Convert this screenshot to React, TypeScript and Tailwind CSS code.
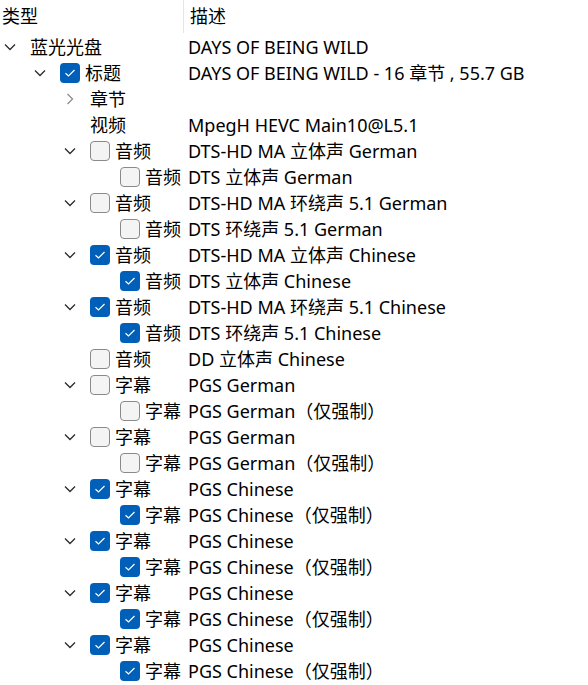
import type { ReactNode } from 'react';

type Row = {
  level: number;
  chevron?: 'down' | 'right';
  checked?: boolean;
  label: string;
  desc: string;
};

const rows: Row[] = [
  { level: 0, chevron: 'down', label: '蓝光光盘', desc: 'DAYS OF BEING WILD' },
  { level: 1, chevron: 'down', checked: true, label: '标题', desc: 'DAYS OF BEING WILD - 16 章节 , 55.7 GB' },
  { level: 2, chevron: 'right', label: '章节', desc: '' },
  { level: 2, label: '视频', desc: 'MpegH HEVC Main10@L5.1' },
  { level: 2, chevron: 'down', checked: false, label: '音频', desc: 'DTS-HD MA 立体声 German' },
  { level: 3, checked: false, label: '音频', desc: 'DTS 立体声 German' },
  { level: 2, chevron: 'down', checked: false, label: '音频', desc: 'DTS-HD MA 环绕声 5.1 German' },
  { level: 3, checked: false, label: '音频', desc: 'DTS 环绕声 5.1 German' },
  { level: 2, chevron: 'down', checked: true, label: '音频', desc: 'DTS-HD MA 立体声 Chinese' },
  { level: 3, checked: true, label: '音频', desc: 'DTS 立体声 Chinese' },
  { level: 2, chevron: 'down', checked: true, label: '音频', desc: 'DTS-HD MA 环绕声 5.1 Chinese' },
  { level: 3, checked: true, label: '音频', desc: 'DTS 环绕声 5.1 Chinese' },
  { level: 2, checked: false, label: '音频', desc: 'DD 立体声 Chinese' },
  { level: 2, chevron: 'down', checked: false, label: '字幕', desc: 'PGS German' },
  { level: 3, checked: false, label: '字幕', desc: 'PGS German（仅强制）' },
  { level: 2, chevron: 'down', checked: false, label: '字幕', desc: 'PGS German' },
  { level: 3, checked: false, label: '字幕', desc: 'PGS German（仅强制）' },
  { level: 2, chevron: 'down', checked: true, label: '字幕', desc: 'PGS Chinese' },
  { level: 3, checked: true, label: '字幕', desc: 'PGS Chinese（仅强制）' },
  { level: 2, chevron: 'down', checked: true, label: '字幕', desc: 'PGS Chinese' },
  { level: 3, checked: true, label: '字幕', desc: 'PGS Chinese（仅强制）' },
  { level: 2, chevron: 'down', checked: true, label: '字幕', desc: 'PGS Chinese' },
  { level: 3, checked: true, label: '字幕', desc: 'PGS Chinese（仅强制）' },
  { level: 2, chevron: 'down', checked: true, label: '字幕', desc: 'PGS Chinese' },
  { level: 3, checked: true, label: '字幕', desc: 'PGS Chinese（仅强制）' },
];

// 每级缩进 30px
const indent: Record<number, string> = {
  0: 'pl-0',
  1: 'pl-[30px]',
  2: 'pl-[60px]',
  3: 'pl-[90px]',
};

function Chevron({ dir }: { dir: 'down' | 'right' }) {
  if (dir === 'down') {
    return (
      <svg width="12" height="8" viewBox="0 0 12 8" className="ml-[4px]">
        <polyline points="1,1.5 6,6.5 11,1.5" fill="none" stroke="#2b2b2b" strokeWidth="1.3" />
      </svg>
    );
  }
  return (
    <svg width="8" height="12" viewBox="0 0 8 12" className="ml-[6px]">
      <polyline points="1.5,1 6.5,6 1.5,11" fill="none" stroke="#8c8c8c" strokeWidth="1.3" />
    </svg>
  );
}

function Checkbox({ checked }: { checked: boolean }) {
  if (checked) {
    return (
      <span className="w-[20px] h-[20px] rounded-[4px] bg-[#005fb8] flex items-center justify-center shrink-0">
        <svg width="12" height="10" viewBox="0 0 12 10">
          <polyline points="1.5,5.2 4.5,8 10.5,2" fill="none" stroke="#ffffff" strokeWidth="1.2" />
        </svg>
      </span>
    );
  }
  return <span className="w-[20px] h-[20px] rounded-[4px] bg-[#f4f4f4] border border-[#8a8a8a] shrink-0" />;
}

function TreeRow({ row }: { row: Row }): ReactNode {
  return (
    <div className="flex h-[26px] items-center">
      <div className={`w-[188px] shrink-0 flex items-center whitespace-nowrap ${indent[row.level]}`}>
        <span className="w-[30px] shrink-0 flex items-center">
          {row.chevron && <Chevron dir={row.chevron} />}
        </span>
        {row.checked !== undefined && (
          <span className="mr-[5px] flex items-center">
            <Checkbox checked={row.checked} />
          </span>
        )}
        <span>{row.label}</span>
      </div>
      <div className="whitespace-nowrap">{row.desc}</div>
    </div>
  );
}

export default function App() {
  return (
    <div className="w-[588px] h-[685px] bg-white text-black text-[18px] leading-[26px] overflow-hidden font-['Noto_Sans','Noto_Sans_CJK_SC',sans-serif]">
      <div className="flex h-[34px] items-start">
        <div className="w-[183px] shrink-0 pl-[2px] pt-[3px]">类型</div>
        <div className="w-px h-[33px] bg-[#e5e5e5]" />
        <div className="pl-[6px] pt-[3px]">描述</div>
      </div>
      {rows.map((row, i) => (
        <TreeRow key={i} row={row} />
      ))}
    </div>
  );
}
